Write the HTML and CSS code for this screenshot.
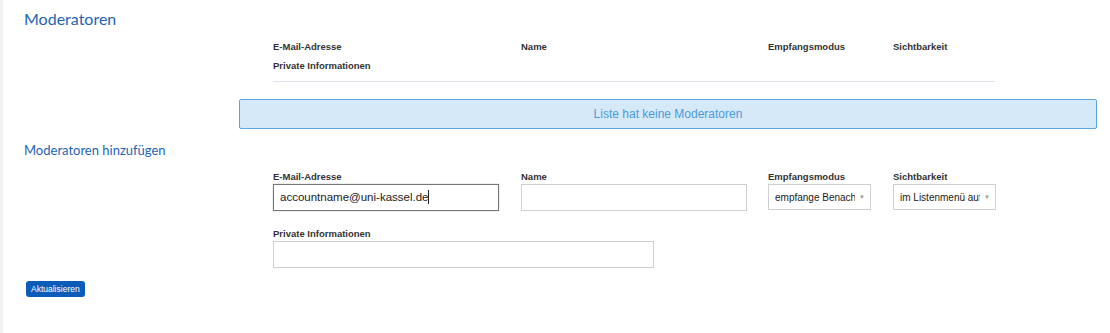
FILE: index.html
```html
<!DOCTYPE html>
<html>
<head>
    <title>Moderatoren</title>
    <link rel="stylesheet" href="styles.css">
</head>
<body>
    <div class="page">
        <h2 class="section-title">Moderatoren</h2>

        <div class="mod-table">
            <div class="mod-head">
                <span>E-Mail-Adresse</span>
                <span>Name</span>
                <span>Empfangsmodus</span>
                <span>Sichtbarkeit</span>
                <span class="wide">Private Informationen</span>
            </div>
        </div>

        <div class="notice">Liste hat keine Moderatoren</div>

        <h3 class="sub-title">Moderatoren hinzufügen</h3>

        <div class="add-form">
            <div class="field">
                <label>E-Mail-Adresse</label>
                <div class="input focused">accountname@uni-kassel.de<span class="caret"></span></div>
            </div>
            <div class="field">
                <label>Name</label>
                <div class="input"></div>
            </div>
            <div class="field">
                <label>Empfangsmodus</label>
                <div class="select"><span class="val">empfange Benachrichtigungen</span><span class="arrow">▼</span></div>
            </div>
            <div class="field">
                <label>Sichtbarkeit</label>
                <div class="select"><span class="val">im Listenmenü aufgeführt</span><span class="arrow">▼</span></div>
            </div>
            <div class="field wide">
                <label>Private Informationen</label>
                <div class="input private"></div>
            </div>
        </div>

        <button class="btn">Aktualisieren</button>
    </div>
</body>
</html>
```

FILE: styles.css
```css
body { margin: 0; background: #fff; font-family: "Liberation Sans", Arial, sans-serif; color: #333; }
.page { border-left: 3px solid #f2f2f2; min-height: 333px; box-sizing: border-box; padding: 9px 0 0 21px; }

.section-title { margin: 0; font-family: Lato, sans-serif; font-weight: 400; font-size: 16px; line-height: 20px; color: #1f63b3; }
.sub-title { margin: 12px 0 0; font-family: Lato, sans-serif; font-weight: 400; font-size: 13px; line-height: 18px; color: #1f63b3; }

.mod-table { margin: 11px 0 0 249px; width: 722px; border-bottom: 1px solid #dde3ea; padding-bottom: 8px; }
.mod-head { display: grid; grid-template-columns: 248px 247px 125px 102px; row-gap: 5px; font-size: 9.5px; font-weight: bold; line-height: 14px; }
.mod-head .wide { grid-column: 1 / -1; }

.notice { margin: 17px 13px 0 215px; height: 28px; border: 1px solid #5aa6e0; border-radius: 2px; background: #d6e9f8; color: #4a9bd9; font-size: 12px; display: flex; align-items: center; justify-content: center; }

.add-form { margin: 13px 0 0 249px; display: grid; grid-template-columns: 248px 247px 125px 102px; row-gap: 18px; }
.field label { display: block; font-size: 9.5px; font-weight: bold; line-height: 10px; margin-bottom: 2px; }
.field.wide { grid-column: 1 / -1; }

.input { width: 226px; height: 27px; box-sizing: border-box; border: 1px solid #cfcfcf; background: #fff; font-size: 11.5px; line-height: 25px; padding: 0 6px; color: #222; }
.input.focused { border-color: #777; box-shadow: 0 0 1px #999; }
.input.private { width: 381px; }
.caret { display: inline-block; width: 1px; height: 14px; background: #222; vertical-align: -3px; }

.select { width: 103px; height: 26px; box-sizing: border-box; border: 1px solid #cfcfcf; display: flex; align-items: center; padding: 0 5px 0 6px; font-size: 10px; color: #222; margin-top: 1px; }
.select .val { flex: 1; overflow: hidden; white-space: nowrap; }
.select .arrow { font-size: 6px; color: #999; margin-left: 4px; }

.btn { margin: 13px 0 0 2px; display: block; background: #0a5cb8; color: #fff; border: 0; border-radius: 3px; font-family: "Liberation Sans", Arial, sans-serif; font-size: 8.5px; height: 16px; padding: 0 5px; }
```
